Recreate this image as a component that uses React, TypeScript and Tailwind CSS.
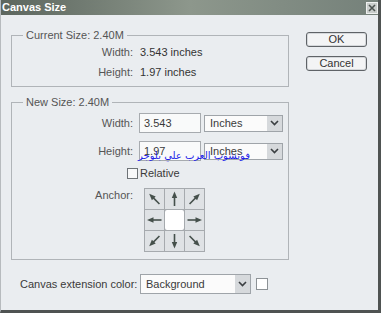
import React from "react";

const Arrow = ({ angle }: { angle: number }) => (
  <svg width="19" height="20" viewBox="0 0 19 20">
    <g transform={`rotate(${angle} 9.5 10)`}>
      <line x1="9.5" y1="17" x2="9.5" y2="7" stroke="#45504b" strokeWidth="1.6" />
      <polygon points="9.5,2.5 6.8,9 12.2,9" fill="#45504b" />
    </g>
  </svg>
);

const Chevron = () => (
  <svg width="9" height="6" viewBox="0 0 9 6">
    <polyline points="1,1 4.5,4.5 8,1" fill="none" stroke="#3b3f42" strokeWidth="1.6" />
  </svg>
);

const Select = ({ label, w, h }: { label: string; w: string; h: string }) => (
  <div className={`flex items-stretch border border-[#9fa4a9] bg-[#fbfbfb] ${w} ${h}`}>
    <div className="flex-1 flex items-center pl-[5px] text-[#3a3a3a]">{label}</div>
    <div className="w-[15px] bg-[#d6d9dc] flex items-center justify-center">
      <Chevron />
    </div>
  </div>
);

export default function App() {
  const angles = [-45, 0, 45, -90, null, 90, -135, 180, 135];
  return (
    <div
      className="relative w-[383px] h-[316px] bg-white text-[11px] text-[#3c3c3c]"
      style={{ fontFamily: '"Liberation Sans", Arial, sans-serif' }}
    >
      <div className="w-[381px] h-[313px] flex flex-col bg-[#eaedf0] border-l border-l-[#b7bbbe] border-r-[3px] border-r-[#4f5352] border-b-[3px] border-b-[#4f5352]">
        {/* Title bar */}
        <div className="h-[15px] flex items-center justify-between bg-gradient-to-r from-[#5c665e] via-[#8d978c] to-[#75817a]">
          <span className="pl-[1px] text-[11px] font-bold text-white leading-none">Canvas Size</span>
          <div className="w-[12px] h-[12px] bg-[#c9cdcb] border border-[#eef0ef] flex items-center justify-center">
            <svg width="8" height="8" viewBox="0 0 8 8">
              <path d="M1 1 L7 7 M7 1 L1 7" stroke="#4c5350" strokeWidth="1.6" />
            </svg>
          </div>
        </div>

        <div className="flex">
          {/* Left column */}
          <div className="ml-[10px] w-[278px] flex flex-col">
            <fieldset className="mt-[13px] border border-[#b0b4b8] pb-[4px]">
              <legend className="ml-[11px] px-[3px] leading-[14px] text-[#555]">Current Size: 2.40M</legend>
              <div className="flex h-[20px] items-center">
                <span className="w-[121px] text-right text-[#555]">Width:</span>
                <span className="ml-[7px] text-[#333]">3.543 inches</span>
              </div>
              <div className="flex h-[20px] items-center">
                <span className="w-[121px] text-right text-[#555]">Height:</span>
                <span className="ml-[7px] text-[#333]">1.97 inches</span>
              </div>
            </fieldset>

            <fieldset className="mt-[8px] border border-[#b0b4b8] pb-[7px]">
              <legend className="ml-[11px] px-[3px] leading-[14px] text-[#555]">New Size: 2.40M</legend>
              <div className="mt-[4px] flex items-center">
                <span className="w-[121px] text-right text-[#555]">Width:</span>
                <div className="ml-[6px] w-[62px] h-[20px] border border-[#a7abaf] bg-[#f9fafa] flex items-center pl-[4px] text-[#3a3a3a]">3.543</div>
                <div className="ml-[3px]">
                  <Select label="Inches" w="w-[79px]" h="h-[17px]" />
                </div>
              </div>
              <div className="mt-[8px] flex items-center">
                <span className="w-[121px] text-right text-[#555]">Height:</span>
                <div className="ml-[6px] w-[62px] h-[20px] border border-[#a7abaf] bg-[#f9fafa] flex items-center pl-[4px] text-[#3a3a3a]">1.97</div>
                <div className="ml-[3px]">
                  <Select label="Inches" w="w-[79px]" h="h-[17px]" />
                </div>
              </div>
              <div className="mt-[7px] flex items-center h-[11px]">
                <div className="ml-[115px] w-[11px] h-[11px] border border-[#6e7377] bg-[#f7f8f9]" />
                <span className="ml-[2px] text-[#3a3a3a]">Relative</span>
              </div>
              <div className="mt-[9px] flex items-start">
                <span className="w-[121px] text-right leading-[14px] text-[#555]">Anchor:</span>
                <div className="ml-[11px] grid grid-cols-[repeat(3,19px)] grid-rows-[repeat(3,20px)] gap-px p-px bg-[#a6aaae]">
                  {angles.map((a, i) =>
                    a === null ? (
                      <div key={i} className="bg-white rounded-[2px]" />
                    ) : (
                      <div key={i} className="bg-[#dfe2e5] flex items-center justify-center">
                        <Arrow angle={a} />
                      </div>
                    )
                  )}
                </div>
              </div>
            </fieldset>

            <div className="mt-[14px] pl-[9px] flex items-center">
              <span className="w-[120px] text-[#3a3a3a]">Canvas extension color:</span>
              <Select label="Background" w="w-[111px]" h="h-[20px]" />
              <div className="ml-[5px] w-[12px] h-[12px] border border-[#8d9296] bg-white" />
            </div>
          </div>

          {/* Right column */}
          <div className="ml-[17px] mt-[17px] flex flex-col">
            <div className="w-[61px] h-[15px] rounded-[3px] border border-[#5f6367] bg-[#f3f4f5] shadow-[inset_0_0_0_1px_#d5d8db] flex items-center justify-center text-[#333]">OK</div>
            <div className="mt-[9px] w-[61px] h-[15px] rounded-[3px] border border-[#5f6367] bg-[#f3f4f5] shadow-[inset_0_0_0_1px_#d5d8db] flex items-center justify-center text-[#333]">Cancel</div>
          </div>
        </div>
      </div>

      {/* Watermark overlay */}
      <div
        dir="rtl"
        className="absolute left-[138px] top-[149px] text-[10px] leading-[13px] text-[#1f1fe8]"
        style={{ fontFamily: '"DejaVu Sans", sans-serif' }}
      >
        فوتشوب العرب علي بلوجر
      </div>
    </div>
  );
}
